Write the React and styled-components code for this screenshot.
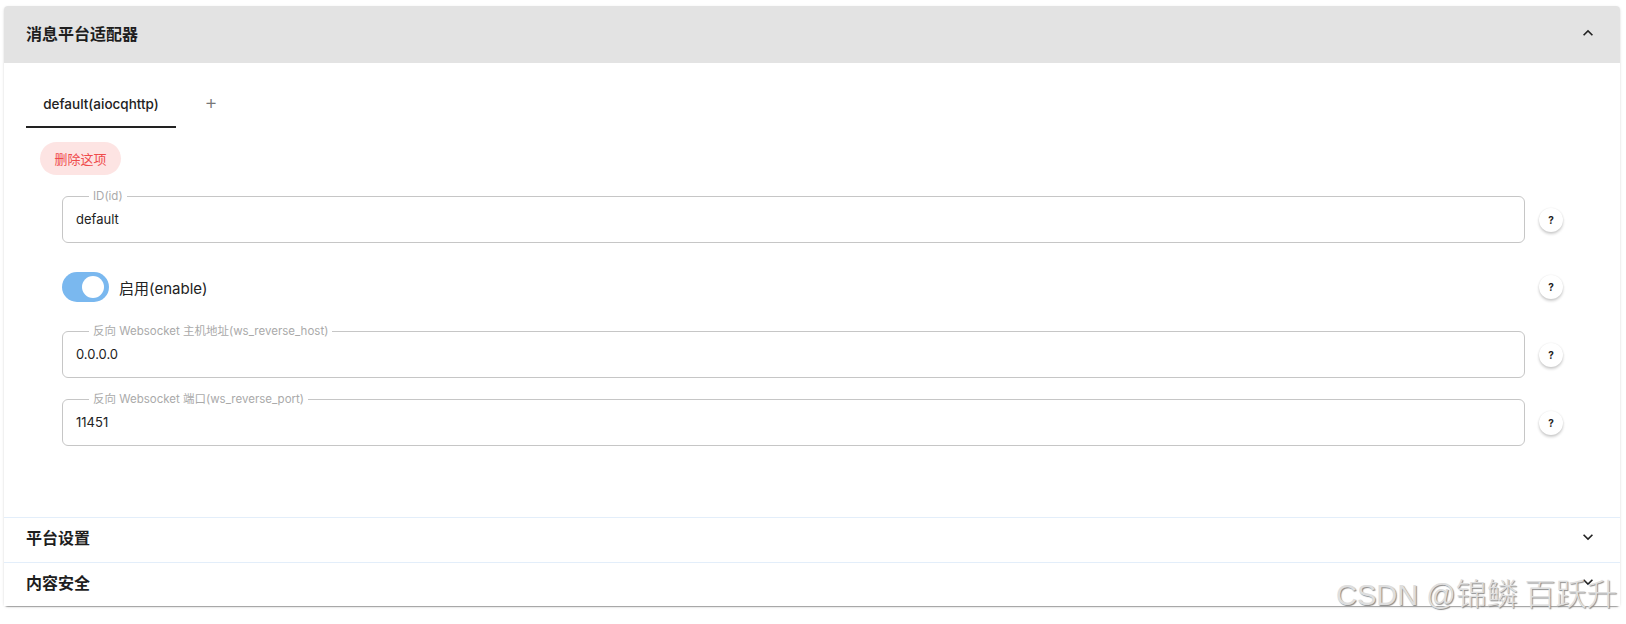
import React from "react";
import styled, { createGlobalStyle } from "styled-components";

const Global = createGlobalStyle`
  html, body { margin: 0; padding: 0; background: #fff; }
  body { font-family: Inter, "Noto Sans CJK SC", sans-serif; color: #1f1f1f; }
  * { box-sizing: border-box; }
`;

const Page = styled.div`
  padding: 6px 6px 0 4px;
  position: relative;
  min-height: 624px;
`;

const Card = styled.div`
  position: relative;
  border-radius: 4px;
  box-shadow: 0 2px 1px -1px rgba(0,0,0,.2), 0 1px 1px 0 rgba(0,0,0,.14), 0 1px 3px 0 rgba(0,0,0,.12);
  background: #fff;
`;

const PanelHeader = styled.div`
  height: ${p => p.$h}px;
  display: flex;
  align-items: center;
  justify-content: space-between;
  padding: 0 24px ${p => (p.$active ? 3 : 6)}px 22px;
  background: ${p => (p.$active ? "#e3e3e3" : "#fff")};
  border-top: ${p => (p.$divider ? "1px solid #e3eefa" : "none")};
  border-radius: ${p => (p.$active ? "4px 4px 0 0" : "0")};
`;

const PanelTitle = styled.div`
  font-family: "Noto Sans CJK SC", sans-serif;
  font-weight: 700;
  font-size: 16px;
  color: #1e1e1e;
`;

const Chevron = styled.svg`
  width: 20px;
  height: 20px;
  fill: #222;
  margin-right: -2px;
`;

const PanelBody = styled.div`
  height: 454px;
  padding: 17px 0 0 22px;
`;

const TabRow = styled.div`
  display: flex;
  align-items: center;
  height: 48px;
`;

const Tab = styled.div`
  width: 150px;
  height: 48px;
  display: flex;
  align-items: center;
  justify-content: center;
  font-size: 13.5px;
  font-weight: 500;
  color: #222;
  border-bottom: 2px solid #222;
  padding-top: 2px;
`;

const AddTab = styled.div`
  width: 70px;
  display: flex;
  justify-content: center;
  font-size: 20px;
  font-weight: 300;
  color: #777;
  margin-top: -4px;
`;

const DeleteBtn = styled.button`
  margin: 14px 0 0 14px;
  height: 33px;
  width: 81px;
  border: none;
  border-radius: 17px;
  background: #fde4e3;
  color: #ef4b4b;
  font-family: "Noto Sans CJK SC", sans-serif;
  font-size: 13px;
  padding: 0;
`;

const Fields = styled.div`
  margin: 21px 0 0 36px;
  width: 1501px;
  display: flex;
  flex-direction: column;
`;

const Row = styled.div`
  display: flex;
  align-items: center;
  gap: 14px;
  margin-top: ${p => p.$mt || 0}px;
`;

const Outline = styled.fieldset`
  flex: 1;
  margin: 0;
  height: 53px;
  border: 1px solid #c6c6c6;
  border-radius: 6px;
  padding: 0 13px;
  display: flex;
  align-items: center;
  margin-top: -6px;
`;

const Legend = styled.legend`
  margin-left: 13px;
  padding: 0 4px;
  font-size: 11.5px;
  color: #aaa;
  line-height: 12px;
  font-family: Inter, "Noto Sans CJK SC", sans-serif;
`;

const Value = styled.div`
  font-size: 13px;
  color: #222;
  margin-top: -6px;
`;

const Help = styled.div`
  width: 24px;
  height: 24px;
  border-radius: 50%;
  background: #fff;
  box-shadow: 0 2px 3px rgba(0,0,0,.2), 0 0 2px rgba(0,0,0,.08);
  display: flex;
  align-items: center;
  justify-content: center;
  font-size: 10px;
  font-weight: 700;
  color: #222;
  flex-shrink: 0;
`;

const SwitchRow = styled.div`
  flex: 1;
  display: flex;
  align-items: center;
  gap: 10px;
  height: 30px;
`;

const Track = styled.div`
  width: 47px;
  height: 30px;
  border-radius: 15px;
  background: #7ab8ef;
  display: flex;
  align-items: center;
  justify-content: flex-end;
  padding-right: 5px;
`;

const Thumb = styled.div`
  width: 22px;
  height: 22px;
  border-radius: 50%;
  background: #fff;
`;

const SwitchLabel = styled.div`
  font-size: 15px;
  color: #222;
  font-family: Inter, "Noto Sans CJK SC", sans-serif;
`;

const Watermark = styled.div`
  position: absolute;
  left: 1336px;
  top: 572px;
  font-family: "Liberation Sans", "Noto Sans CJK SC", sans-serif;
  font-size: 29px;
  line-height: 40px;
  color: #dedede;
  text-shadow: 1px 1px 1px #8a8a8a;
  white-space: nowrap;
`;

const Cjk = styled.span`
  font-size: 31px;
  font-family: "Noto Sans CJK SC", sans-serif;
  font-weight: 300;
`;

const up = "M7.41 15.41L12 10.83l4.59 4.58L18 14l-6-6-6 6z";
const down = "M7.41 8.59L12 13.17l4.59-4.58L18 10l-6 6-6-6 1.41-1.41z";

function Field({ label, value }) {
  return (
    <Outline>
      <Legend>{label}</Legend>
      <Value>{value}</Value>
    </Outline>
  );
}

export default function App() {
  return (
    <>
      <Global />
      <Page>
        <Card>
          <PanelHeader $h={57} $active>
            <PanelTitle>消息平台适配器</PanelTitle>
            <Chevron viewBox="0 0 24 24"><path d={up} /></Chevron>
          </PanelHeader>
          <PanelBody>
            <TabRow>
              <Tab>default(aiocqhttp)</Tab>
              <AddTab>+</AddTab>
            </TabRow>
            <DeleteBtn>删除这项</DeleteBtn>
            <Fields>
              <Row>
                <Field label="ID(id)" value="default" />
                <Help>?</Help>
              </Row>
              <Row $mt={29}>
                <SwitchRow>
                  <Track><Thumb /></Track>
                  <SwitchLabel>启用(enable)</SwitchLabel>
                </SwitchRow>
                <Help>?</Help>
              </Row>
              <Row $mt={29}>
                <Field label="反向 Websocket 主机地址(ws_reverse_host)" value="0.0.0.0" />
                <Help>?</Help>
              </Row>
              <Row $mt={21}>
                <Field label="反向 Websocket 端口(ws_reverse_port)" value="11451" />
                <Help>?</Help>
              </Row>
            </Fields>
          </PanelBody>
          <PanelHeader $h={45} $divider>
            <PanelTitle>平台设置</PanelTitle>
            <Chevron viewBox="0 0 24 24"><path d={down} /></Chevron>
          </PanelHeader>
          <PanelHeader $h={44} $divider>
            <PanelTitle>内容安全</PanelTitle>
            <Chevron viewBox="0 0 24 24"><path d={down} /></Chevron>
          </PanelHeader>
        </Card>
        <Watermark>CSDN @<Cjk>锦鳞 百跃升</Cjk></Watermark>
      </Page>
    </>
  );
}
